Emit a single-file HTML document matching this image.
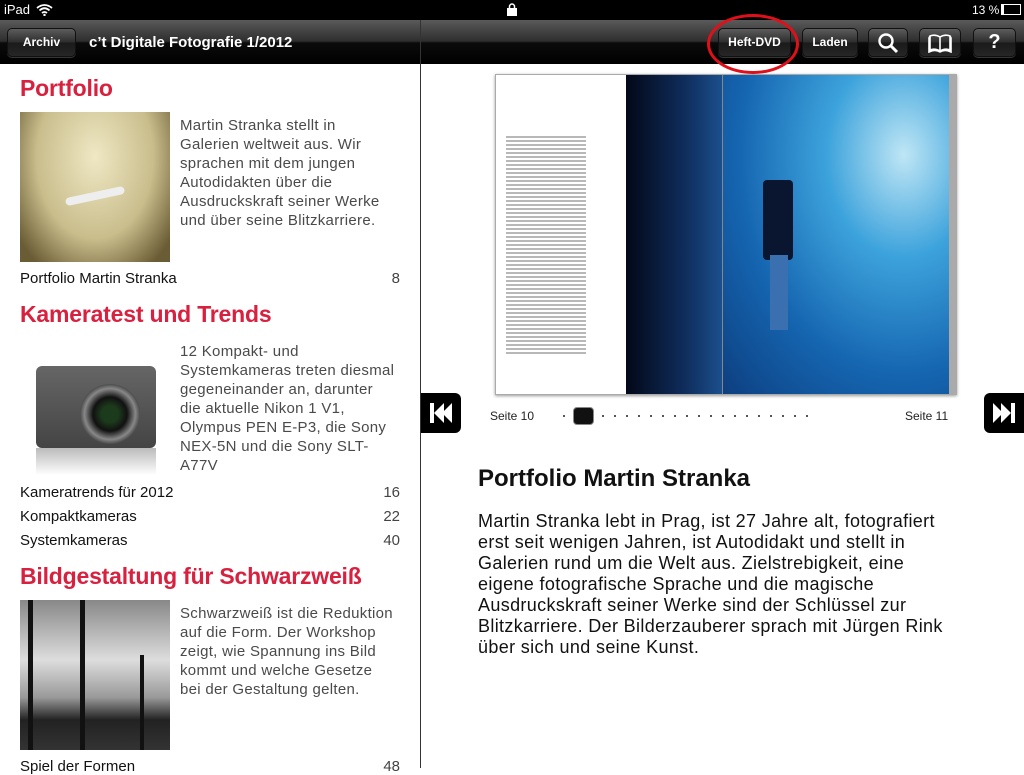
<!DOCTYPE html>
<html><head><meta charset="utf-8"><style>
*{margin:0;padding:0;box-sizing:border-box}
body{width:1024px;height:768px;position:relative;overflow:hidden;background:#fff;font-family:"Liberation Sans",sans-serif}
.a{position:absolute}
.sb{left:0;top:0;width:1024px;height:20px;background:#000;color:#fff;font-size:13px}
.tb{left:0;top:20px;width:1024px;height:44px;background:linear-gradient(#5a5a5a 0%,#2e2e2e 48%,#0b0b0b 52%,#000 100%)}
.btn{position:absolute;top:28px;height:29px;border-radius:5px;background:linear-gradient(#5c5c5c,#2c2c2c 50%,#1a1a1a 51%,#262626);border:1px solid #111;box-shadow:0 1px 0 rgba(255,255,255,.2);color:#fff;font-weight:bold;font-size:12px;text-align:center;line-height:27px}
h2{position:absolute;left:20px;color:#d8203f;font-size:23px;font-weight:bold;letter-spacing:-.2px}
.p{position:absolute;left:180px;width:240px;color:#4a4a4a;font-size:15px;line-height:19px;white-space:nowrap;letter-spacing:.3px}
.row{position:absolute;left:20px;width:380px;font-size:15px;color:#111;display:flex;justify-content:space-between}
.row span:last-child{color:#444}
.dot{display:inline-block;width:2px;height:2px;background:#222;border-radius:1px;margin:0 5px;vertical-align:middle}
</style></head><body>
<div class="a sb"><span class="a" style="left:4px;top:2px">iPad</span>
<svg class="a" style="left:36px;top:3px" width="17" height="13" viewBox="0 0 17 13"><path d="M1 5 Q8.5 -1 16 5 M3.5 7.5 Q8.5 3 13.5 7.5 M6 10 Q8.5 8 11 10" stroke="#fff" stroke-width="1.8" fill="none"/><circle cx="8.5" cy="12" r="1.2" fill="#fff"/></svg>
<svg class="a" style="left:507px;top:3px" width="10" height="13"><rect x="0" y="5" width="10" height="8" fill="#fff"/><path d="M2.5 5V3.5a2.5 2.5 0 0 1 5 0V5" stroke="#fff" stroke-width="1.5" fill="none"/></svg>
<span class="a" style="left:972px;top:3px;font-size:12px">13 %</span>
<div class="a" style="left:1001px;top:4px;width:20px;height:11px;border:1px solid #fff"><div style="width:2px;height:9px;background:#fff"></div></div></div>
<div class="a tb"></div>
<div class="a" style="left:420px;top:20px;width:1px;height:748px;background:#333"></div>
<div class="btn" style="left:7px;width:69px">Archiv</div>
<div class="a" style="left:89px;top:34px;color:#fff;font-weight:bold;font-size:15px">c’t Digitale Fotografie 1/2012</div>
<div class="btn" style="left:718px;width:73px">Heft-DVD</div>
<div class="btn" style="left:802px;width:56px">Laden</div>
<div class="btn" style="left:868px;width:40px"><svg width="22" height="22" viewBox="0 0 22 22" style="margin-top:3px"><circle cx="9" cy="9" r="6.5" stroke="#fff" stroke-width="2.4" fill="none"/><path d="M13.5 13.5 20 20" stroke="#fff" stroke-width="3"/></svg></div>
<div class="btn" style="left:919px;width:42px"><svg width="26" height="20" viewBox="0 0 26 20" style="margin-top:4px"><path d="M13 4Q8 1 3 3V17Q8 15 13 18Q18 15 23 17V3Q18 1 13 4ZM13 4V18M3 3 2 5V19Q8 16 13 19Q18 16 24 19V5L23 3" stroke="#fff" stroke-width="1.6" fill="none"/></svg></div>
<div class="btn" style="left:973px;width:43px;font-size:20px">?</div>
<div class="a" style="left:707px;top:14px;width:92px;height:60px;border:3px solid #e0101a;border-radius:50%"></div>

<h2 style="top:75px">Portfolio</h2>
<div class="a" style="left:20px;top:112px;width:150px;height:150px;background:radial-gradient(ellipse at 50% 30%,#efe8c4,#c9bd8c 55%,#6a5c34 90%)"><div class="a" style="left:45px;top:80px;width:60px;height:8px;background:#eee;transform:rotate(-12deg);border-radius:4px"></div></div>
<div class="p" style="top:116px">Martin Stranka stellt in<br>Galerien weltweit aus. Wir<br>sprachen mit dem jungen<br>Autodidakten über die<br>Ausdruckskraft seiner Werke<br>und über seine Blitzkarriere.</div>
<div class="row" style="top:270px"><span>Portfolio Martin Stranka</span><span>8</span></div>

<h2 style="top:301px">Kameratest und Trends</h2>
<div class="a" style="left:36px;top:366px;width:120px;height:82px;background:linear-gradient(#666,#444);border-radius:6px"><div class="a" style="left:44px;top:18px;width:60px;height:60px;border-radius:50%;background:radial-gradient(#1c3a1c 20%,#111 40%,#888 60%,#333 75%)"></div></div>
<div class="a" style="left:36px;top:448px;width:120px;height:27px;background:linear-gradient(#bbb,#fff)"></div>
<div class="p" style="top:342px">12 Kompakt- und<br>Systemkameras treten diesmal<br>gegeneinander an, darunter<br>die aktuelle Nikon 1 V1,<br>Olympus PEN E-P3, die Sony<br>NEX-5N und die Sony SLT-<br>A77V</div>
<div class="row" style="top:484px"><span>Kameratrends für 2012</span><span>16</span></div>
<div class="row" style="top:508px"><span>Kompaktkameras</span><span>22</span></div>
<div class="row" style="top:532px"><span>Systemkameras</span><span>40</span></div>

<h2 style="top:563px">Bildgestaltung für Schwarzweiß</h2>
<div class="a" style="left:20px;top:600px;width:150px;height:150px;background:linear-gradient(#888,#ddd 40%,#999 65%,#222 80%,#333)"><div class="a" style="left:8px;top:0;width:5px;height:150px;background:#111"></div><div class="a" style="left:60px;top:0;width:5px;height:150px;background:#111"></div><div class="a" style="left:120px;top:55px;width:4px;height:95px;background:#111"></div></div>
<div class="p" style="top:604px">Schwarzweiß ist die Reduktion<br>auf die Form. Der Workshop<br>zeigt, wie Spannung ins Bild<br>kommt und welche Gesetze<br>bei der Gestaltung gelten.</div>
<div class="row" style="top:758px"><span>Spiel der Formen</span><span>48</span></div>

<div class="a" style="left:495px;top:74px;width:462px;height:321px;border:1px solid #aaa;box-shadow:0 1px 3px rgba(0,0,0,.4);background:#fff"></div>
<div class="a" style="left:506px;top:134px;width:80px;height:220px;background:repeating-linear-gradient(#fff 0 2px,#999 2px 4px);opacity:.7"></div>
<div class="a" style="left:626px;top:75px;width:96px;height:319px;background:linear-gradient(90deg,#020818,#0f2c5a 60%,#1b4f8c)"></div>
<div class="a" style="left:722px;top:75px;width:1px;height:319px;background:#888"></div>
<div class="a" style="left:723px;top:75px;width:226px;height:319px;background:radial-gradient(ellipse at 80% 25%,#bfe6f5,#3da3dc 30%,#1565b0 65%,#0d3f80)"></div>
<div class="a" style="left:949px;top:75px;width:7px;height:319px;background:#aaa"></div>
<div class="a" style="left:763px;top:180px;width:30px;height:80px;background:#0a1530;border-radius:4px"></div>
<div class="a" style="left:770px;top:255px;width:18px;height:75px;background:#3a6fb0"></div>

<div class="a" style="left:421px;top:393px;width:40px;height:40px;background:#000;border-radius:0 6px 6px 0"><svg width="40" height="40"><path d="M9 10h4v20H9zM13 20l10-10v20zM21 20l10-10v20z" fill="#fff"/></svg></div>
<div class="a" style="left:984px;top:393px;width:40px;height:40px;background:#000;border-radius:6px 0 0 6px"><svg width="40" height="40"><path d="M9 10l10 10-10 10zM17 10l10 10-10 10zM27 10h4v20h-4z" fill="#fff"/></svg></div>
<div class="a" style="left:490px;top:409px;font-size:12px;color:#222">Seite 10</div>
<div class="a" style="left:905px;top:409px;font-size:12px;color:#222">Seite 11</div>
<div class="a" style="left:558px;top:407px;height:12px;line-height:12px;white-space:nowrap"><span class="dot"></span><span style="display:inline-block;width:21px;height:18px;border:1px solid #888;border-radius:4px;background:#111;vertical-align:middle;margin:0 3px"></span><span class="dot"></span><span class="dot"></span><span class="dot"></span><span class="dot"></span><span class="dot"></span><span class="dot"></span><span class="dot"></span><span class="dot"></span><span class="dot"></span><span class="dot"></span><span class="dot"></span><span class="dot"></span><span class="dot"></span><span class="dot"></span><span class="dot"></span><span class="dot"></span><span class="dot"></span><span class="dot"></span></div>

<div class="a" style="left:478px;top:465px;font-size:24px;font-weight:bold;color:#111">Portfolio Martin Stranka</div>
<div class="a" style="left:478px;top:511px;width:540px;font-size:18px;line-height:21px;letter-spacing:.35px;color:#111;white-space:nowrap">Martin Stranka lebt in Prag, ist 27 Jahre alt, fotografiert<br>erst seit wenigen Jahren, ist Autodidakt und stellt in<br>Galerien rund um die Welt aus. Zielstrebigkeit, eine<br>eigene fotografische Sprache und die magische<br>Ausdruckskraft seiner Werke sind der Schlüssel zur<br>Blitzkarriere. Der Bilderzauberer sprach mit Jürgen Rink<br>über sich und seine Kunst.</div>
</body></html>
